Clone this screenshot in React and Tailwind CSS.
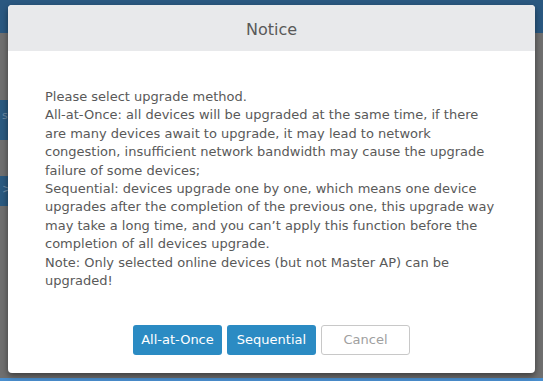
import React from 'react';

const font = { fontFamily: '"DejaVu Sans", Verdana, sans-serif' };

export default function App() {
  return (
    <div className="relative w-[543px] h-[381px] overflow-hidden bg-[#6f6f6f]" style={font}>
      {/* page behind the overlay */}
      <div className="flex flex-col h-full">
        <div className="h-[33px] bg-[#2a5880]" />
        <div className="flex-1 flex flex-col">
          <div className="h-[67px]" />
          <div className="h-[40px] w-[20px] bg-[#2b5a80] text-[#6d8aa4] text-[11px] pt-[8px] pl-[2px]">s</div>
          <div className="h-[36px]" />
          <div className="h-[30px] w-[20px] bg-[#2b5a80] text-[#6d8aa4] text-[12px] pt-[4px] pl-[2px]">&gt;</div>
          <div className="flex-1" />
          <div className="h-[3px] bg-[#4a8fcf]" />
        </div>
      </div>

      {/* modal */}
      <div className="absolute left-[8px] top-[5px] w-[527px] h-[368px] rounded-[4px] bg-white overflow-hidden flex flex-col shadow-[0_3px_6px_rgba(0,0,0,0.45)]">
        <div className="h-[46px] pt-[3px] bg-[#e8e9eb] flex items-center justify-center text-[16px] text-[#595959]">
          Notice
        </div>
        <div className="pt-[37px] pl-[37px] w-[488px] text-[13px] leading-[18.4px] text-[#595959]">
          <p>Please select upgrade method.</p>
          <p>All-at-Once: all devices will be upgraded at the same time, if there are many devices await to upgrade, it may lead to network congestion, insufficient network bandwidth may cause the upgrade failure of some devices;</p>
          <p>Sequential: devices upgrade one by one, which means one device upgrades after the completion of the previous one, this upgrade way may take a long time, and you can’t apply this function before the completion of all devices upgrade.</p>
          <p>Note: Only selected online devices (but not Master AP) can be upgraded!</p>
        </div>
        <div className="mt-auto mb-[18px] flex justify-center gap-[5px] text-[13px]">
          <button className="w-[89px] h-[30px] rounded-[3px] bg-[#2b8bc3] text-white">All-at-Once</button>
          <button className="w-[89px] h-[30px] rounded-[3px] bg-[#2b8bc3] text-white">Sequential</button>
          <button className="w-[89px] h-[30px] rounded-[3px] border border-[#c8c8c8] bg-white text-[#a0a0a0]">Cancel</button>
        </div>
      </div>
    </div>
  );
}
